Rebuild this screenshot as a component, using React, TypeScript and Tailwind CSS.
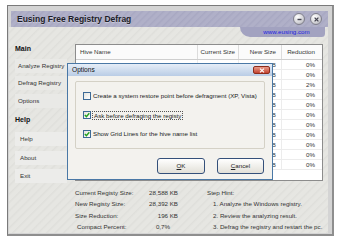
import React from "react";

const reductions = ["0%", "0%", "2%", "0%", "0%", "0%", "0%", "0%", "0%", "0%", "0%"];
const newSizes = ["28,392 KB", "1,024 KB", "6,144 KB", "512 KB", "256 KB", "8,192 KB", "2,048 KB", "768 KB", "4,096 KB", "1,536 KB", "3,072 KB"];

function Check({ checked }: { checked: boolean }) {
  return (
    <div className="w-[8px] h-[8px] border border-[#3d6a96] bg-gradient-to-br from-[#e4e4de] to-[#ffffff] flex items-center justify-center shrink-0">
      {checked && (
        <svg width="6" height="6" viewBox="0 0 6 6">
          <path d="M0.8 3 L2.4 4.6 L5.3 1.2" stroke="#21a121" strokeWidth="1.4" fill="none" />
        </svg>
      )}
    </div>
  );
}

function RoundBtn({ kind }: { kind: "min" | "close" }) {
  return (
    <div className="w-[12px] h-[12px] rounded-full border border-[#80808c] bg-[radial-gradient(circle_at_35%_30%,#ffffff,#d6d6da_55%,#a4a4ac)] flex items-center justify-center">
      <svg width="7" height="7" viewBox="0 0 7 7">
        {kind === "min" ? (
          <path d="M1.5 3.5 H5.5" stroke="#444450" strokeWidth="1.4" />
        ) : (
          <path d="M1.6 1.6 L5.4 5.4 M5.4 1.6 L1.6 5.4" stroke="#444450" strokeWidth="1.3" />
        )}
      </svg>
    </div>
  );
}

export default function App() {
  return (
    <div className="relative w-[340px] h-[242px] overflow-hidden bg-white pl-[7px] pt-[5px] font-['Liberation_Sans',Arial,sans-serif] text-[6.2px] text-[#2e2e2e]">
      {/* Window */}
      <div className="w-[327px] h-[231px] border-l border-t border-[#7a7a7a] border-r-2 border-r-[#8e8e8e] border-b-2 border-b-[#8e8e8e] bg-[#d4d4d4] flex flex-col pt-[5px] pl-[1px] pr-[4px] pb-[1px]">
        {/* Title bar */}
        <div className="ml-[2px] h-[16px] shrink-0 bg-[repeating-linear-gradient(135deg,#b0b0c8_0px,#b0b0c8_2px,#a8a8c2_3px,#b0b0c8_5px)] flex items-center justify-between pl-[6px] pr-[6px]">
          <span className="font-bold text-[8.5px] text-[#1c1c28] [text-shadow:0_1px_0_rgba(255,255,255,0.35)]">Eusing Free Registry Defrag</span>
          <div className="flex items-center gap-[5px]">
            <RoundBtn kind="min" />
            <RoundBtn kind="close" />
          </div>
        </div>

        {/* Body */}
        <div className="flex-1 flex flex-col bg-[repeating-linear-gradient(135deg,#e6e6e2_0px,#e6e6e2_3px,#dfdfdb_4px,#e6e6e2_6px)]">
          {/* top strip with url tab */}
          <div className="h-[17px] shrink-0 flex justify-end items-start pr-[3px]">
            <div className="w-[85px] h-[10px] rounded-bl-[14px] rounded-br-[5px] bg-[#a2a2c0] flex items-center justify-center pl-[8px]">
              <span className="text-[#1a1ae0] text-[6.2px]">www.eusing.com</span>
            </div>
          </div>

          {/* main row */}
          <div className="h-[137px] shrink-0 flex">
            {/* sidebar */}
            <div className="w-[66px] shrink-0 pl-[6px] flex flex-col">
              <div className="h-[12px] flex items-center font-bold text-[7px] text-[#111]">Main</div>
              <div className="ml-[-2px] w-[59px] h-[1px] mt-[1px] bg-[#9cb0c8]" />
              <div className="mt-[3px] flex flex-col gap-[3.5px]">
                {["Analyze Registry", "Defrag Registry", "Options"].map((t) => (
                  <div key={t} className="w-[52px] h-[14px] flex items-center pl-[3px] bg-[#e9e9e6] text-[#333]">
                    {t}
                  </div>
                ))}
              </div>
              <div className="mt-[7px] h-[12px] flex items-center font-bold text-[7px] text-[#111]">Help</div>
              <div className="mt-[7px] flex flex-col gap-[4.5px]">
                {["Help", "About", "Exit"].map((t) => (
                  <div key={t} className="w-[52px] h-[14px] flex items-center pl-[5px] bg-[#ececea] text-[#333]">
                    {t}
                  </div>
                ))}
              </div>
            </div>

            {/* table */}
            <div className="w-[248px] h-[137px] border border-[#8c8c8c] bg-white flex flex-col">
              <div className="h-[15px] shrink-0 flex border-b border-[#cfcfcf] bg-[#fbfbfb] text-[#333]">
                <div className="w-[122px] pl-[4px] flex items-center border-r border-[#dcdcdc]">Hive Name</div>
                <div className="w-[41px] pr-[3px] flex items-center justify-end border-r border-[#dcdcdc]">Current Size</div>
                <div className="w-[43px] pr-[5px] flex items-center justify-end border-r border-[#dcdcdc]">New Size</div>
                <div className="w-[40px] pr-[7px] flex items-center justify-end">Reduction</div>
              </div>
              {reductions.map((r, i) => (
                <div key={i} className="h-[10px] shrink-0 flex border-b border-[#ececec] text-[#333]">
                  <div className="w-[122px] border-r border-[#ececec]" />
                  <div className="w-[41px] border-r border-[#ececec]" />
                  <div className="w-[43px] pr-[5px] flex items-center justify-end border-r border-[#ececec]">{newSizes[i]}</div>
                  <div className="w-[40px] pr-[7px] flex items-center justify-end">{r}</div>
                </div>
              ))}
            </div>
          </div>

          {/* stats */}
          <div className="flex pl-[66px] pt-[6px] text-[#333]">
            <div className="w-[103px] flex flex-col">
              <div className="h-[11.3px] flex items-center justify-between"><span>Current Registy Size:</span><span>28,588 KB</span></div>
              <div className="h-[11.3px] flex items-center justify-between"><span>New Registy Size:</span><span>28,392 KB</span></div>
              <div className="h-[11.3px] flex items-center justify-between"><span>Size Reduction:</span><span>196 KB</span></div>
              <div className="h-[11.3px] flex items-center justify-between pl-[2px] pr-[8px]"><span>Compact Percent:</span><span>0,7%</span></div>
            </div>
            <div className="ml-[29px] flex flex-col">
              <div className="h-[11.3px] flex items-center">Step Hint:</div>
              <div className="h-[11.3px] flex items-center pl-[6px]">1. Analyze the Windows registry.</div>
              <div className="h-[11.3px] flex items-center pl-[6px]">2. Review the analyzing result.</div>
              <div className="h-[11.3px] flex items-center pl-[6px]">3. Defrag the registry and restart the pc.</div>
            </div>
          </div>
        </div>
      </div>

      {/* Options dialog */}
      <div className="absolute left-[67px] top-[63px] w-[206px] h-[117px] border border-[#4a78a6] bg-[#f3f2ee] flex flex-col">
        <div className="h-[12px] shrink-0 bg-gradient-to-b from-[#e6eef8] to-[#b9cce5] flex items-center justify-between pl-[4px] pr-[2px]">
          <span className="text-[6.6px] text-[#111]">Options</span>
          <div className="w-[17px] h-[8px] rounded-[2px] border border-[#8c2c1c] bg-gradient-to-b from-[#e79a8a] to-[#c4412e] flex items-center justify-center">
            <svg width="6" height="5" viewBox="0 0 6 5">
              <path d="M1 0.6 L5 4.4 M5 0.6 L1 4.4" stroke="#ffffff" strokeWidth="1.2" />
            </svg>
          </div>
        </div>
        <div className="flex-1 flex flex-col px-[7px] pt-[5px]">
          <div className="h-[68px] border border-[#d4d1c6] rounded-[2px] pl-[7px] pt-[10px] flex flex-col gap-[11px] text-[#222]">
            <div className="h-[8px] flex items-center gap-[2px]">
              <Check checked={false} />
              <span>Create a system restore point before defragment (XP, Vista)</span>
            </div>
            <div className="h-[8px] flex items-center gap-[1px]">
              <Check checked={true} />
              <span className="border border-dotted border-[#555] px-[1px] leading-[7px]">Ask before defraging the registy</span>
            </div>
            <div className="h-[8px] flex items-center gap-[2px]">
              <Check checked={true} />
              <span>Show Grid Lines for the hive name list</span>
            </div>
          </div>
          <div className="mt-[9px] flex justify-end gap-[12px] pr-[1px] text-[#222]">
            <div className="w-[48px] h-[16px] rounded-[3px] border border-[#34507a] bg-gradient-to-b from-[#ffffff] to-[#e2e0d8] flex items-center justify-center">
              <span><span className="underline">O</span>K</span>
            </div>
            <div className="w-[47px] h-[16px] rounded-[3px] border border-[#34507a] bg-gradient-to-b from-[#ffffff] to-[#e2e0d8] flex items-center justify-center">
              <span><span className="underline">C</span>ancel</span>
            </div>
          </div>
        </div>
      </div>
    </div>
  );
}
